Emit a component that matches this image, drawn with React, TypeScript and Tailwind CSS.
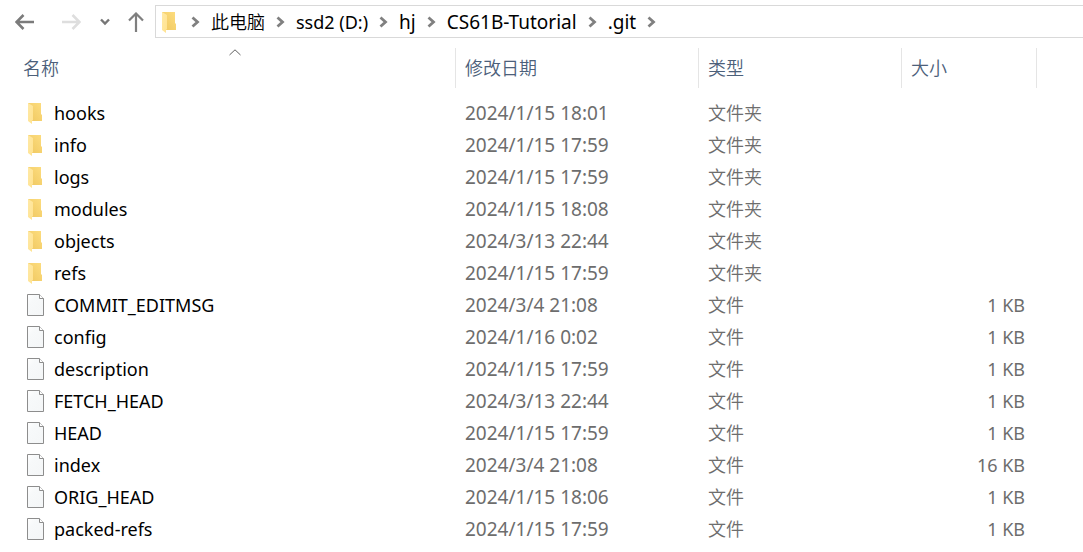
import React from "react";

type Entry = { name: string; date: string; kind: "folder" | "file"; size?: string };

const entries: Entry[] = [
  { name: "hooks", date: "2024/1/15 18:01", kind: "folder" },
  { name: "info", date: "2024/1/15 17:59", kind: "folder" },
  { name: "logs", date: "2024/1/15 17:59", kind: "folder" },
  { name: "modules", date: "2024/1/15 18:08", kind: "folder" },
  { name: "objects", date: "2024/3/13 22:44", kind: "folder" },
  { name: "refs", date: "2024/1/15 17:59", kind: "folder" },
  { name: "COMMIT_EDITMSG", date: "2024/3/4 21:08", kind: "file", size: "1 KB" },
  { name: "config", date: "2024/1/16 0:02", kind: "file", size: "1 KB" },
  { name: "description", date: "2024/1/15 17:59", kind: "file", size: "1 KB" },
  { name: "FETCH_HEAD", date: "2024/3/13 22:44", kind: "file", size: "1 KB" },
  { name: "HEAD", date: "2024/1/15 17:59", kind: "file", size: "1 KB" },
  { name: "index", date: "2024/3/4 21:08", kind: "file", size: "16 KB" },
  { name: "ORIG_HEAD", date: "2024/1/15 18:06", kind: "file", size: "1 KB" },
  { name: "packed-refs", date: "2024/1/15 17:59", kind: "file", size: "1 KB" },
];

const crumbs = [
  { label: "此电脑", style: "text-lg leading-7 font-[350]" },
  { label: "ssd2 (D:)", style: "text-lg leading-7" },
  { label: "hj", style: "text-[19px] leading-7" },
  { label: "CS61B-Tutorial", style: "text-[19px] leading-7" },
  { label: ".git", style: "text-[19px] leading-7" },
];

function FolderIcon() {
  return (
    <svg width="16" height="22" viewBox="0 0 16 22" className="shrink-0" aria-hidden="true">
      <defs>
        <linearGradient id="folder-back" x1="0" y1="1" x2="1" y2="0">
          <stop offset="0" stopColor="#efc760" />
          <stop offset="1" stopColor="#fddd7f" />
        </linearGradient>
        <linearGradient id="folder-flap" x1="0" y1="0" x2="1" y2="1">
          <stop offset="0" stopColor="#ffe9a6" />
          <stop offset="1" stopColor="#ffe28f" />
        </linearGradient>
      </defs>
      <path d="M1 1H14V12L15 13V19H5L1 17Z" fill="url(#folder-back)" />
      <path d="M1 1L6 4V18L5 19V22L1 19Z" fill="url(#folder-flap)" />
    </svg>
  );
}

function FileIcon() {
  return (
    <svg width="17" height="22" viewBox="0 0 17 22" className="shrink-0" aria-hidden="true">
      <defs>
        <linearGradient id="page-fill" x1="0" y1="0" x2="1" y2="1">
          <stop offset="0" stopColor="#ffffff" />
          <stop offset="0.3" stopColor="#f7f9fa" />
          <stop offset="1" stopColor="#f4f6f7" />
        </linearGradient>
      </defs>
      <path d="M.5 .5H12.5L16.5 4.5V21.5H.5Z" fill="url(#page-fill)" stroke="#8d8d8d" />
      <path d="M12.5 .5V4.5H16.5" fill="#fff" stroke="#8d8d8d" />
    </svg>
  );
}

function CrumbChevron() {
  return (
    <svg width="9" height="12" viewBox="0 0 9 12" className="shrink-0" aria-hidden="true">
      <path d="M1.5 1.5L6.5 6L1.5 10.5" fill="none" stroke="#808080" strokeWidth="2.8" />
    </svg>
  );
}

function Arrow({ color }: { color: string }) {
  return (
    <svg width="20" height="16" viewBox="0 0 20 16" aria-hidden="true">
      <path d="M19 8H2M8.5 1L1.5 8L8.5 15" fill="none" stroke={color} strokeWidth="2.6" />
    </svg>
  );
}

export default function App() {
  return (
    <main className="min-h-screen overflow-x-hidden bg-white font-['Noto_Sans','Noto_Sans_CJK_SC',sans-serif] text-lg leading-8 text-black">
      <header className="flex items-center pt-[5px]">
        <nav aria-label="导航" className="flex h-[33px] w-[155px] shrink-0 items-center pl-[15px]">
          <button type="button" aria-label="后退" className="flex w-[46px] items-center">
            <Arrow color="#7b7b7b" />
          </button>
          <button type="button" aria-label="前进" disabled className="flex w-[39px] -scale-x-100 items-center justify-end">
            <Arrow color="#dedede" />
          </button>
          <button type="button" aria-label="最近的位置" className="flex w-7 items-center">
            <svg width="10" height="8" viewBox="0 0 10 8" aria-hidden="true">
              <path d="M1 1.5L5 5.5L9 1.5" fill="none" stroke="#767676" strokeWidth="2.4" />
            </svg>
          </button>
          <button type="button" aria-label="上移" className="flex items-center">
            <svg width="16" height="20" viewBox="0 0 16 20" aria-hidden="true">
              <path d="M8 20V2M1 8.5L8 1.5L15 8.5" fill="none" stroke="#7f7f7f" strokeWidth="2.2" />
            </svg>
          </button>
        </nav>
        <nav
          aria-label="地址"
          className="flex h-[33px] min-w-0 flex-1 items-center border border-r-0 border-[#d9d9d9] pl-[5px] whitespace-nowrap"
        >
          <FolderIcon />
          <span className="flex w-[34px] justify-center pl-[3px]">
            <CrumbChevron />
          </span>
          {crumbs.map((crumb) => (
            <React.Fragment key={crumb.label}>
              <a href="#" className={crumb.style}>
                {crumb.label}
              </a>
              <span className="flex w-[31px] justify-center">
                <CrumbChevron />
              </span>
            </React.Fragment>
          ))}
        </nav>
      </header>

      <table className="mt-[10px] w-full table-fixed border-separate border-spacing-0">
        <colgroup>
          <col className="w-[456px]" />
          <col className="w-[243px]" />
          <col className="w-[203px]" />
          <col className="w-[135px]" />
          <col />
        </colgroup>
        <thead className="text-left text-[#4c607a]">
          <tr className="h-10">
            <th scope="col" aria-sort="ascending" className="relative border-r border-[#e5e5e5] p-0 pl-[23px] font-[350]">
              名称
              <svg width="12" height="7" viewBox="0 0 12 7" className="absolute top-px left-[229px]" aria-hidden="true">
                <path d="M.5 6L6 .8L11.5 6" fill="none" stroke="#606060" />
              </svg>
            </th>
            <th scope="col" className="border-r border-[#e5e5e5] p-0 pl-[9px] font-[350]">修改日期</th>
            <th scope="col" className="border-r border-[#e5e5e5] p-0 pl-[9px] font-[350]">类型</th>
            <th scope="col" className="border-r border-[#e5e5e5] p-0 pl-[9px] font-[350]">大小</th>
            <td />
          </tr>
        </thead>
        <tbody className="text-[#6d6d6d]">
          <tr aria-hidden="true" className="h-[9px]">
            <td colSpan={5} className="p-0" />
          </tr>
          {entries.map((entry) => (
            <tr key={entry.name} className="h-8">
              <td className="p-0 pl-[27px] text-black">
                <div className="flex items-center">
                  <span className="flex w-[27px] shrink-0">{entry.kind === "folder" ? <FolderIcon /> : <FileIcon />}</span>
                  {entry.name}
                </div>
              </td>
              <td className="p-0 pl-[9px] text-[19px] leading-8">{entry.date}</td>
              <td className="p-0 pl-[9px] font-[350]">{entry.kind === "folder" ? "文件夹" : "文件"}</td>
              <td className="p-0 pr-3 text-right">{entry.size}</td>
              <td />
            </tr>
          ))}
        </tbody>
      </table>
    </main>
  );
}
